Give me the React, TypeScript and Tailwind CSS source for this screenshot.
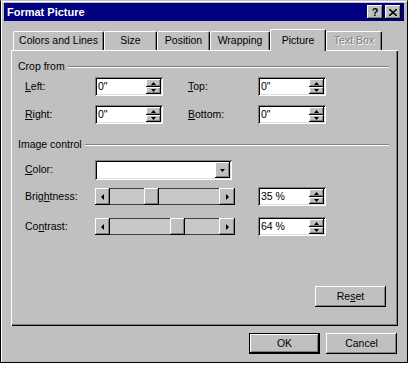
import React from 'react';

const raised = 'shadow-[inset_-1px_-1px_#000,inset_1px_1px_#fff,inset_-2px_-2px_#808080]';
const sunken = 'shadow-[inset_1px_1px_#808080,inset_-1px_-1px_#fff,inset_2px_2px_#000,inset_-2px_-2px_#dfdfdf]';

const tabs = [
  { label: 'Colors and Lines', w: 'w-[91px]' },
  { label: 'Size', w: 'w-[53px]' },
  { label: 'Position', w: 'w-[53px]' },
  { label: 'Wrapping', w: 'w-[60px]' },
  { label: 'Picture', w: 'w-[56px]', active: true },
  { label: 'Text Box', w: 'w-[56px]', disabled: true },
];

function Tri({ dir }: { dir: 'up' | 'down' | 'left' | 'right' }) {
  const pts = {
    up: '0,3 5,3 2.5,0',
    down: '0,0 5,0 2.5,3',
    left: '3,0 3,6 0,3',
    right: '0,0 0,6 3,3',
  }[dir];
  const vertical = dir === 'up' || dir === 'down';
  return (
    <svg width={vertical ? 5 : 3} height={vertical ? 3 : 6} viewBox={vertical ? '0 0 5 3' : '0 0 3 6'}>
      <polygon points={pts} fill="#000" />
    </svg>
  );
}

function Spin({ value }: { value: string }) {
  return (
    <div className={`flex h-[19px] w-[68px] bg-white p-[2px] ${sunken}`}>
      <span className="flex-1 pl-[1px] leading-[15px]">{value}</span>
      <div className="flex w-[15px] flex-col bg-[#c0c0c0]">
        <div className={`flex h-[8px] items-center justify-center ${raised}`}>
          <Tri dir="up" />
        </div>
        <div className={`flex h-[7px] items-center justify-center ${raised}`}>
          <Tri dir="down" />
        </div>
      </div>
    </div>
  );
}

function Slider({ thumb }: { thumb: string }) {
  return (
    <div className="flex h-[17px] w-[140px]">
      <div className={`flex w-[15px] items-center justify-center bg-[#c0c0c0] ${raised}`}>
        <Tri dir="left" />
      </div>
      <div className="flex flex-1 bg-[#c8c8c8] shadow-[inset_0_1px_#404040,inset_0_-1px_#404040]">
        <div className={`h-full w-[15px] bg-[#c0c0c0] ${thumb} ${raised}`} />
      </div>
      <div className={`flex w-[16px] items-center justify-center bg-[#c0c0c0] ${raised}`}>
        <Tri dir="right" />
      </div>
    </div>
  );
}

function GroupHeader({ title }: { title: string }) {
  return (
    <div className="flex h-[13px] items-center gap-[3px] pl-[7px] pr-[9px]">
      <span className="leading-[13px]">{title}</span>
      <div className="flex-1 border-t border-b border-t-[#808080] border-b-white" />
    </div>
  );
}

function Button({ children, isDefault }: { children: React.ReactNode; isDefault?: boolean }) {
  return (
    <div
      className={`flex h-[21px] w-[71px] items-center justify-center bg-[#c0c0c0] ${
        isDefault ? 'border border-black' : ''
      } ${raised}`}
    >
      {children}
    </div>
  );
}

export default function App() {
  return (
    <div className="h-[365px] w-[408px] bg-white font-['Liberation_Sans',Arial,sans-serif] text-[10.5px] text-black">
      <div className="h-[363px] w-[408px] border border-black border-t-[#c0c0c0] bg-[#c0c0c0] px-[3px] pt-[2px] shadow-[inset_1px_1px_#fff]">
        <div className="flex h-[18px] items-center justify-between bg-[#000080] pl-[3px] pr-[3px]">
          <span className="text-[11px] font-bold text-white">Format Picture</span>
          <div className="flex gap-[2px]">
            <div className={`flex h-[14px] w-[16px] items-center justify-center bg-[#c0c0c0] text-[11px] font-bold leading-none ${raised}`}>
              ?
            </div>
            <div className={`flex h-[14px] w-[16px] items-center justify-center bg-[#c0c0c0] ${raised}`}>
              <svg width="8" height="7" viewBox="0 0 8 7">
                <path d="M0 0 L8 7 M8 0 L0 7" stroke="#000" strokeWidth="1.6" />
              </svg>
            </div>
          </div>
        </div>

        <div className="ml-[7px] mt-[8px] w-[387px]">
          <div className="flex h-[21px] items-end pl-[2px]">
            {tabs.map((t) => (
              <div
                key={t.label}
                className={`flex items-center justify-center rounded-t-[2px] border-l border-t border-white bg-[#c0c0c0] shadow-[inset_-1px_0_#808080] border-r border-r-black ${t.w} ${
                  t.active ? 'relative z-10 -mb-[1px] h-[22px]' : 'h-[19px]'
                } ${t.disabled ? 'text-[#808080] [text-shadow:1px_1px_#fff]' : ''}`}
              >
                {t.label}
              </div>
            ))}
          </div>

          <div className="flex h-[276px] flex-col bg-[#c0c0c0] pt-[10px] shadow-[inset_1px_1px_#fff,inset_-1px_-1px_#000,inset_-2px_-2px_#808080]">
            <GroupHeader title="Crop from" />
            <div className="mt-[4px] flex flex-col gap-[9px] pl-[14px]">
              <div className="flex h-[19px] items-center">
                <span className="w-[70px]"><u>L</u>eft:</span>
                <Spin value={'0"'} />
                <span className="ml-[25px] w-[70px]"><u>T</u>op:</span>
                <Spin value={'0"'} />
              </div>
              <div className="flex h-[19px] items-center">
                <span className="w-[70px]"><u>R</u>ight:</span>
                <Spin value={'0"'} />
                <span className="ml-[25px] w-[70px]"><u>B</u>ottom:</span>
                <Spin value={'0"'} />
              </div>
            </div>

            <div className="mt-[14px]">
              <GroupHeader title="Image control" />
            </div>
            <div className="mt-[9px] flex flex-col pl-[14px]">
              <div className="flex h-[20px] items-center">
                <span className="w-[70px]"><u>C</u>olor:</span>
                <div className={`flex h-[20px] w-[137px] justify-end bg-white p-[2px] ${sunken}`}>
                  <div className={`flex w-[15px] items-center justify-center bg-[#c0c0c0] ${raised}`}>
                    <Tri dir="down" />
                  </div>
                </div>
              </div>
              <div className="mt-[7px] flex h-[19px] items-center">
                <span className="w-[70px]">Brig<u>h</u>tness:</span>
                <Slider thumb="ml-[34px]" />
                <div className="ml-[23px]">
                  <Spin value="35 %" />
                </div>
              </div>
              <div className="mt-[11px] flex h-[19px] items-center">
                <span className="w-[70px]">Co<u>n</u>trast:</span>
                <Slider thumb="ml-[60px]" />
                <div className="ml-[23px]">
                  <Spin value="64 %" />
                </div>
              </div>
            </div>

            <div className="mt-[50px] flex justify-end pr-[12px]">
              <Button>
                <span>Re<u>s</u>et</span>
              </Button>
            </div>
          </div>

          <div className="mt-[7px] flex justify-end gap-[6px] pr-[1px]">
            <Button isDefault>OK</Button>
            <Button>Cancel</Button>
          </div>
        </div>
      </div>
    </div>
  );
}
